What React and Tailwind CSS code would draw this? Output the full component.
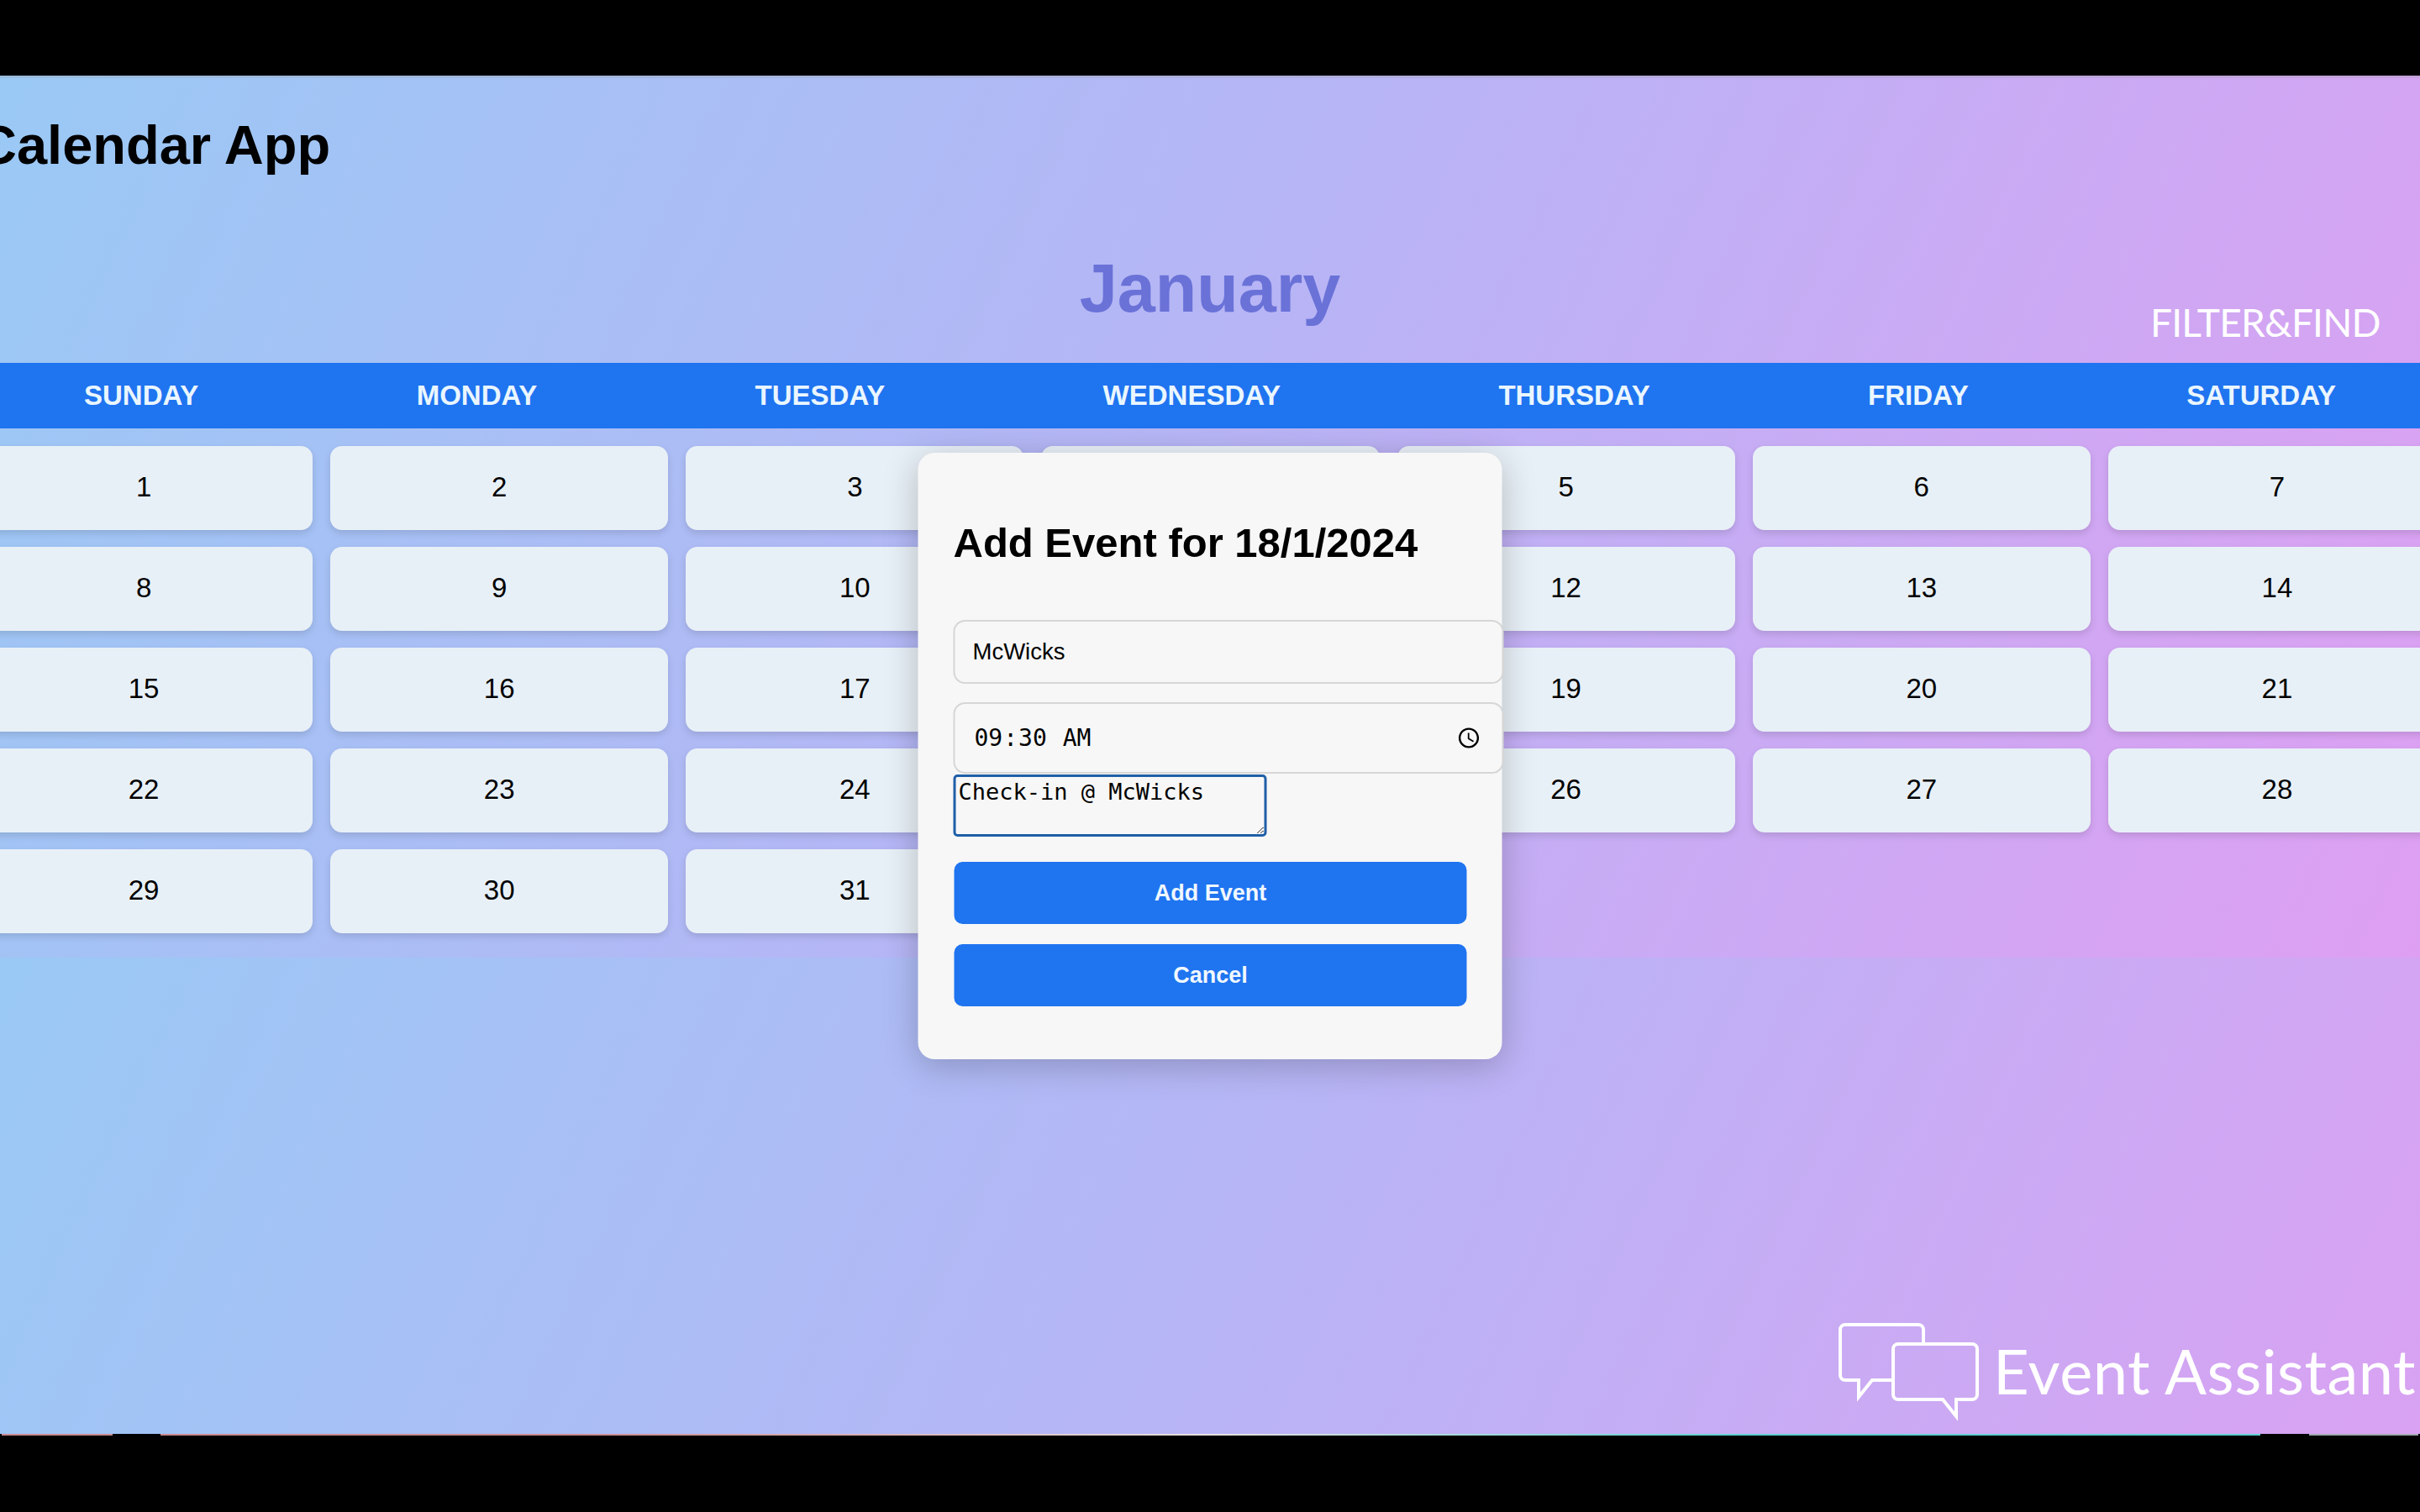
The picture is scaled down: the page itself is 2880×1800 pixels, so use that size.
const DAYS = ['SUNDAY', 'MONDAY', 'TUESDAY', 'WEDNESDAY', 'THURSDAY', 'FRIDAY', 'SATURDAY'];
const DATES = Array.from({ length: 31 }, (_, i) => i + 1);

function ChatIcon() {
  return (
    <svg width="176" height="120" viewBox="0 0 176 120" fill="none" stroke="white" strokeWidth="4" className="mr-[11px] shrink-0">
      <path d="M104 26V11a6 6 0 0 0-6-6H11a6 6 0 0 0-6 6v54a6 6 0 0 0 6 6h16v20l16-20h23" />
      <path d="M74 28h88a6 6 0 0 1 6 6v54a6 6 0 0 1-6 6h-19v20l-16-20H74a6 6 0 0 1-6-6V34a6 6 0 0 1 6-6z" />
    </svg>
  );
}

export default function App() {
  return (
    <div className="w-full h-screen bg-black pt-[90px] overflow-hidden relative font-['Liberation_Sans',sans-serif]">
      <div className="relative h-[1617px] overflow-hidden bg-[linear-gradient(115deg,#9ac9f5,#b8b4f5_50%,#de9ff2)] bg-[length:100%_1050px] shadow-[inset_0_3px_0_rgba(150,150,150,0.25)]">
        <h1 className="text-[65px] leading-[74px] font-bold text-black -ml-[27px] pt-[46px]">Calendar App</h1>

        <h2 className="text-[81px] leading-[93px] font-bold text-[#6a72d8] text-center mt-[87px]">January</h2>

        {/* Weekday bar */}
        <div className="mt-[42px] h-[78px] bg-[#1f74f0] flex items-center justify-between px-[100px]">
          {DAYS.map((day) => (
            <span key={day} className="text-[33px] font-bold text-[#eaf6ff]">{day}</span>
          ))}
        </div>

        {/* Date cells */}
        <div className="-ml-[30px] -mr-[31px] mt-[21px] grid grid-cols-7 gap-x-[21px] gap-y-[20px]">
          {DATES.map((d) => (
            <div key={d} className="h-[100px] pb-[2px] rounded-[14px] bg-[#e8f0f7] shadow-[0_4px_8px_rgba(0,0,0,0.12)] flex items-center justify-center text-[33px] text-black">
              {d}
            </div>
          ))}
        </div>

        <span className="absolute left-[2559px] top-[266px] text-[46px] leading-[56px] font-['Lato',sans-serif] font-normal text-white tracking-[-0.8px]">FILTER&amp;FIND</span>

        <div className="absolute left-[2185px] top-[1482px] flex items-center">
          <ChatIcon />
          <span className="text-[74px] leading-[88px] font-['Lato',sans-serif] font-normal text-white whitespace-nowrap tracking-[0.5px]">Event Assistant</span>
        </div>
      </div>

      {/* Thin edge line left at the bottom of the frame */}
      <div className="flex h-[2px] px-[2px]">
        <div className="w-[132px] bg-[#c98a90]" />
        <div className="w-[57px]" />
        <div className="w-[2499px] bg-[linear-gradient(90deg,#c98a90,#c98a90_20%,#e8e0e0_50%,#60cfd0_75%,#60cfd0)]" />
        <div className="w-[58px]" />
        <div className="flex-1 bg-[#a0a8b0]" />
      </div>

      {/* Add event modal */}
      <div className="absolute left-1/2 top-1/2 -translate-x-1/2 -translate-y-1/2 w-[695px] h-[722px] rounded-[20px] bg-[#f7f7f7] shadow-[0_8px_40px_rgba(0,0,0,0.22)] pl-[42px] pt-[80px]">
        <h3 className="text-[49px] leading-[55px] font-bold text-black whitespace-nowrap">Add Event for 18/1/2024</h3>
        <input
          defaultValue="McWicks"
          className="block mt-[64px] w-[655px] h-[76px] rounded-[14px] border-2 border-[#d6d6d6] bg-[#f7f7f7] px-[21px] text-[27.5px] text-black outline-none"
        />
        <input
          type="time"
          defaultValue="09:30"
          className="block mt-[22px] w-[655px] h-[85px] rounded-[14px] border-2 border-[#d6d6d6] bg-[#f7f7f7] px-[22px] text-[28px] font-['DejaVu_Sans_Mono',monospace] text-black outline-none"
        />
        <textarea
          readOnly
          value="Check-in @ McWicks"
          className="block mt-[1px] w-[373px] h-[74px] rounded-[5px] border-[3px] border-[#1f5fa8] bg-[#f7f7f7] px-[3px] pt-[2px] pb-0 text-[27px] leading-[32px] font-['DejaVu_Sans_Mono',monospace] text-black outline-none"
        />
        <button className="block mt-[30px] ml-px w-[610px] h-[74px] rounded-[10px] bg-[#1f74f0] text-[27px] font-bold text-[#f0f8ff]">Add Event</button>
        <button className="block mt-[24px] ml-px w-[610px] h-[74px] rounded-[10px] bg-[#1f74f0] text-[27px] font-bold text-[#f0f8ff]">Cancel</button>
      </div>
    </div>
  );
}
